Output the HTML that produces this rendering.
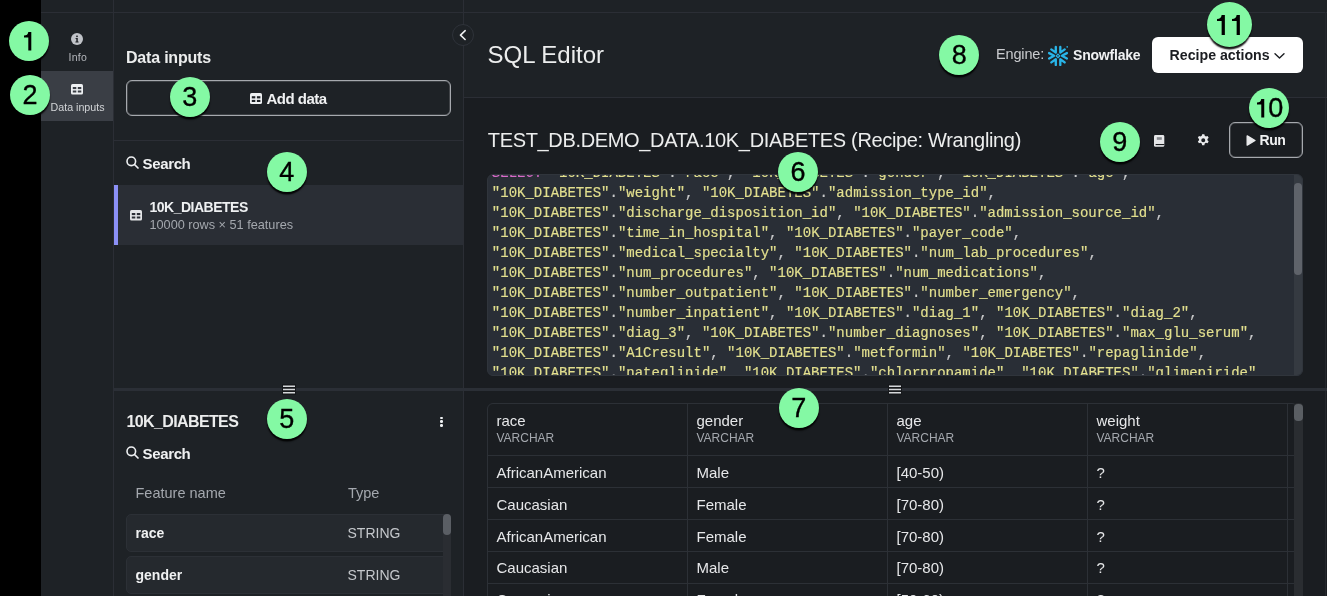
<!DOCTYPE html>
<html><head><meta charset="utf-8">
<style>
*{margin:0;padding:0;box-sizing:border-box}
html,body{width:1327px;height:596px;overflow:hidden;background:#1e2226;font-family:"Liberation Sans",sans-serif;color:#e8e9ea}
.a{position:absolute}
.t{position:absolute;white-space:nowrap}
.badge{position:absolute;border-radius:50%;background:#84f9a4;box-shadow:0 2.5px 1.5px rgba(0,0,0,.92)}
.code{position:absolute;font-family:"Liberation Mono",monospace;font-size:14px;line-height:20px;white-space:pre;color:#e2df8e;-webkit-text-stroke:0.2px #e2df8e}
.code .p{color:#c9cacb;-webkit-text-stroke:0.2px #c9cacb}
.code .k{color:#d96bc9;-webkit-text-stroke:0.2px #d96bc9}
svg{position:absolute;overflow:visible}
</style></head><body>
<div style="position:absolute;left:0;top:0;width:1327px;height:596px;will-change:transform">

<div class="a" style="left:0px;top:0px;width:41px;height:596px;background:#000"></div>
<div class="a" style="left:464px;top:98px;width:863px;height:498px;background:#1a1d21"></div>
<div class="a" style="left:41px;top:12px;width:1286px;height:1px;background:#2b2e35"></div>
<div class="a" style="left:113px;top:0px;width:1px;height:596px;background:#2b2e35"></div>
<div class="a" style="left:463px;top:0px;width:1px;height:596px;background:#2b2e35"></div>
<div class="a" style="left:1325px;top:12px;width:1px;height:584px;background:#25282d"></div>
<div class="a" style="left:464px;top:97px;width:863px;height:1px;background:#2b2e35"></div>
<div class="a" style="left:41px;top:71px;width:72px;height:50px;background:#3a3e45"></div>
<svg style="left:71px;top:33px" width="12" height="12" viewBox="0 0 12 12"><circle cx="6" cy="6" r="6" fill="#c0c3c8"/><rect x="5.2" y="2.6" width="1.6" height="1.5" fill="#1f2226"/><path d="M4.6 5h2.2v3.6h.8v.9H4.4v-.9h.9V5.9h-.7z" fill="#1f2226"/></svg>
<div class="t" style="left:68.60px;top:51.71px;font-size:10.5px;line-height:10.5px;font-weight:400;color:#b4b7bc;letter-spacing:0.25px;">Info</div>
<svg style="left:71px;top:83.7px" width="12" height="10.5" viewBox="0 0 12 10.5"><rect x="0" y="0" width="12" height="10.5" rx="1.5" fill="#eef0f2"/><g fill="#3a3e45"><rect x="1.8" y="3.0" width="3.5" height="2.1"/><rect x="6.8" y="3.0" width="3.5" height="2.1"/><rect x="1.8" y="6.5" width="3.5" height="2.0"/><rect x="6.8" y="6.5" width="3.5" height="2.0"/></g></svg>
<div class="t" style="left:50.50px;top:101.94px;font-size:10.7px;line-height:10.7px;font-weight:400;color:#d2d4d7;letter-spacing:0px;">Data inputs</div>
<div class="t" style="left:126.00px;top:50.06px;font-size:16px;line-height:16px;font-weight:700;color:#eceded;letter-spacing:-0.2px;">Data inputs</div>
<div class="a" style="left:126px;top:80px;width:325px;height:36px;border:1px solid #a6a9ae;border-radius:6px;box-shadow:inset 0 0 0 0.6px rgba(166,169,174,.45)"></div>
<svg style="left:250px;top:93px" width="12" height="11" viewBox="0 0 12 11"><rect x="0" y="0" width="12" height="11" rx="1.6" fill="#eef0f2"/><g fill="#1e2226"><rect x="1.8" y="3.2" width="3.5" height="2.2"/><rect x="6.9" y="3.2" width="3.5" height="2.2"/><rect x="1.8" y="6.9" width="3.5" height="2.1"/><rect x="6.9" y="6.9" width="3.5" height="2.1"/></g></svg>
<div class="t" style="left:266.50px;top:90.60px;font-size:15px;line-height:15px;font-weight:700;color:#f0f1f2;letter-spacing:-0.5px;">Add data</div>
<div class="a" style="left:114px;top:140px;width:349px;height:1px;background:#2b2e35"></div>
<svg style="left:126px;top:156px" width="13" height="13" viewBox="0 0 13 13"><circle cx="5.3" cy="5.3" r="4.3" fill="none" stroke="#eef0f2" stroke-width="1.6"/><path d="M8.5 8.5L12 12" stroke="#eef0f2" stroke-width="1.7" stroke-linecap="round"/></svg>
<div class="t" style="left:142.50px;top:155.60px;font-size:15px;line-height:15px;font-weight:700;color:#f0f1f2;letter-spacing:-0.35px;">Search</div>
<div class="a" style="left:114px;top:185px;width:349px;height:60px;background:#2a2e35"></div>
<div class="a" style="left:114px;top:185px;width:4px;height:60px;background:#8b90f6"></div>
<svg style="left:130px;top:209.8px" width="12" height="10.5" viewBox="0 0 12 10.5"><rect x="0" y="0" width="12" height="10.5" rx="1.5" fill="#e4e6e8"/><g fill="#2a2e35"><rect x="1.8" y="3.0" width="3.5" height="2.1"/><rect x="6.8" y="3.0" width="3.5" height="2.1"/><rect x="1.8" y="6.5" width="3.5" height="2.0"/><rect x="6.8" y="6.5" width="3.5" height="2.0"/></g></svg>
<div class="t" style="left:149.50px;top:199.75px;font-size:14px;line-height:14px;font-weight:700;color:#eef0f2;letter-spacing:-0.5px;">10K_DIABETES</div>
<div class="t" style="left:149.50px;top:219.05px;font-size:12.7px;line-height:12.7px;font-weight:400;color:#a4a8ae;letter-spacing:0px;">10000 rows × 51 features</div>
<div class="a" style="left:114px;top:388px;width:1213px;height:3px;background:#2b2f36"></div>
<svg style="left:282px;top:384px" width="14" height="11" viewBox="0 0 14 11"><rect x="0" y="0" width="14" height="11" fill="#16181b"/><path d="M1 2.2H13M1 5.5H13M1 8.8H13" stroke="#d6d8db" stroke-width="1.5"/></svg>
<svg style="left:888px;top:384px" width="14" height="11" viewBox="0 0 14 11"><rect x="0" y="0" width="14" height="11" fill="#16181b"/><path d="M1 2.2H13M1 5.5H13M1 8.8H13" stroke="#d6d8db" stroke-width="1.5"/></svg>
<div class="t" style="left:126.50px;top:413.56px;font-size:16px;line-height:16px;font-weight:700;color:#eceded;letter-spacing:-0.62px;">10K_DIABETES</div>
<div class="a" style="left:440px;top:416.6px;width:2.5px;height:2.5px;background:#eef0f2;border-radius:50%"></div>
<div class="a" style="left:440px;top:420.3px;width:2.5px;height:2.5px;background:#eef0f2;border-radius:50%"></div>
<div class="a" style="left:440px;top:424.1px;width:2.5px;height:2.5px;background:#eef0f2;border-radius:50%"></div>
<svg style="left:126px;top:446px" width="13" height="13" viewBox="0 0 13 13"><circle cx="5.3" cy="5.3" r="4.3" fill="none" stroke="#eef0f2" stroke-width="1.6"/><path d="M8.5 8.5L12 12" stroke="#eef0f2" stroke-width="1.7" stroke-linecap="round"/></svg>
<div class="t" style="left:142.50px;top:446.00px;font-size:15px;line-height:15px;font-weight:700;color:#f0f1f2;letter-spacing:-0.35px;">Search</div>
<div class="t" style="left:135.50px;top:485.53px;font-size:14.5px;line-height:14.5px;font-weight:400;color:#a4a8ae;letter-spacing:0px;">Feature name</div>
<div class="t" style="left:348.00px;top:485.53px;font-size:14.5px;line-height:14.5px;font-weight:400;color:#a4a8ae;letter-spacing:0px;">Type</div>
<div class="a" style="left:126px;top:514px;width:323px;height:38px;background:#25292e;border:1px solid #2c3036;border-radius:5px"></div>
<div class="t" style="left:135.50px;top:526.45px;font-size:14px;line-height:14px;font-weight:700;color:#f0f1f2;letter-spacing:0px;">race</div>
<div class="t" style="left:347.50px;top:526.45px;font-size:14px;line-height:14px;font-weight:400;color:#c4c7cb;letter-spacing:0px;">STRING</div>
<div class="a" style="left:126px;top:556px;width:323px;height:38px;background:#25292e;border:1px solid #2c3036;border-radius:5px"></div>
<div class="t" style="left:135.50px;top:568.45px;font-size:14px;line-height:14px;font-weight:700;color:#f0f1f2;letter-spacing:0px;">gender</div>
<div class="t" style="left:347.50px;top:568.45px;font-size:14px;line-height:14px;font-weight:400;color:#c4c7cb;letter-spacing:0px;">STRING</div>
<div class="a" style="left:443px;top:514px;width:8px;height:82px;background:#2a2d32;border-radius:4px 4px 0 0"></div>
<div class="a" style="left:443px;top:514px;width:8px;height:21px;background:#5a5e64;border-radius:4px"></div>
<svg style="left:452px;top:24px" width="22" height="22" viewBox="0 0 22 22"><circle cx="11" cy="11" r="10.5" fill="#1e2226" stroke="#2f333a" stroke-width="1"/><path d="M13.2 6.7L8.5 11.1L13.1 15.5" fill="none" stroke="#eef0f2" stroke-width="1.6" stroke-linecap="round" stroke-linejoin="round"/></svg>
<div class="t" style="left:487.50px;top:43.28px;font-size:24px;line-height:24px;font-weight:400;color:#eceded;letter-spacing:0px;">SQL Editor</div>
<div class="t" style="left:996.00px;top:47.13px;font-size:14.5px;line-height:14.5px;font-weight:400;color:#c9cbce;letter-spacing:-0.15px;">Engine:</div>
<svg style="left:1048px;top:45.7px" width="20" height="20" viewBox="0 0 20 20"><g fill="none" stroke="#29b5e8" stroke-width="2.35" stroke-linecap="round" stroke-linejoin="round"><path d="M3.3 3.4L7.8 6.6V0.9"/><path d="M16.7 3.4L12.3 6.6V0.9"/><path d="M1.1 7.1L6.1 9.8L1.1 12.5"/><path d="M18.9 7.1L13.9 9.8L18.9 12.5"/><path d="M3.3 16.4L7.8 13.2V18.9"/><path d="M16.7 16.4L12.3 13.2V18.9"/></g><path d="M10 8.2L11.7 9.9L10 11.6L8.3 9.9Z" fill="none" stroke="#29b5e8" stroke-width="1.2"/><circle cx="19.2" cy="0.9" r="0.8" fill="#29b5e8"/></svg>
<div class="t" style="left:1073.00px;top:47.65px;font-size:14px;line-height:14px;font-weight:700;color:#f0f1f2;letter-spacing:-0.2px;">Snowflake</div>
<div class="a" style="left:1152px;top:37px;width:151px;height:36px;background:#fff;border-radius:6px"></div>
<div class="t" style="left:1169.50px;top:47.78px;font-size:14.2px;line-height:14.2px;font-weight:700;color:#1b1d21;letter-spacing:0px;">Recipe actions</div>
<svg style="left:1274px;top:53px" width="11" height="6" viewBox="0 0 11 6"><path d="M1 0.8L5.5 5L10 0.8" fill="none" stroke="#1b1d21" stroke-width="1.4" stroke-linecap="round" stroke-linejoin="round"/></svg>
<div class="t" style="left:487.80px;top:129.87px;font-size:20px;line-height:20px;font-weight:400;color:#eceded;letter-spacing:-0.34px;">TEST_DB.DEMO_DATA.10K_DIABETES (Recipe: Wrangling)</div>
<svg style="left:1154px;top:134.8px" width="10.3" height="11.8" viewBox="0 0 10.3 11.8"><rect x="0" y="0" width="10.3" height="11.8" rx="1.4" fill="#e6e7e9"/><rect x="2.8" y="2.2" width="5" height="2.6" fill="#85888d"/><rect x="1.6" y="9" width="8.7" height="1.1" fill="#1a1d20"/></svg>
<svg style="left:1197px;top:134px" width="12.5" height="12.5" viewBox="-6.25 -6.25 12.5 12.5"><path fill="#e9eaec" fill-rule="evenodd" d="M-1.1 -6.1h2.2l.4 1.6 1.2.7 1.6-.5 1.1 1.9-1.2 1.1v1.4l1.2 1.1-1.1 1.9-1.6-.5-1.2.7-.4 1.6h-2.2l-.4-1.6-1.2-.7-1.6.5-1.1-1.9 1.2-1.1v-1.4l-1.2-1.1 1.1-1.9 1.6.5 1.2-.7zM0 -2A2 2 0 1 0 0 2A2 2 0 1 0 0 -2z"/></svg>
<div class="a" style="left:1229px;top:122px;width:74px;height:36px;border:1px solid #a6a9ae;border-radius:6px;box-shadow:inset 0 0 0 0.6px rgba(166,169,174,.45)"></div>
<svg style="left:1245.5px;top:135px" width="10" height="11" viewBox="0 0 10 11"><path d="M1.2 0.9L9 5.5L1.2 10.1Z" fill="#e9eaec" stroke="#e9eaec" stroke-width="1.4" stroke-linejoin="round"/></svg>
<div class="t" style="left:1259.50px;top:133.35px;font-size:14px;line-height:14px;font-weight:700;color:#f0f1f2;letter-spacing:-0.4px;">Run</div>
<div class="a" style="left:487px;top:174px;width:816px;height:202px;background:#292e36;border:1px solid #30353c;border-radius:6px;overflow:hidden">
<div class="code" style="left:3.85px;top:-12.33px"><span class="k">SELECT </span>"10K_DIABETES"<span class="p">.</span>"race"<span class="p">, </span>"10K_DIABETES"<span class="p">.</span>"gender"<span class="p">, </span>"10K_DIABETES"<span class="p">.</span>"age"<span class="p">,</span></div>
<div class="code" style="left:3.85px;top:7.67px">"10K_DIABETES"<span class="p">.</span>"weight"<span class="p">, </span>"10K_DIABETES"<span class="p">.</span>"admission_type_id"<span class="p">,</span></div>
<div class="code" style="left:3.85px;top:27.67px">"10K_DIABETES"<span class="p">.</span>"discharge_disposition_id"<span class="p">, </span>"10K_DIABETES"<span class="p">.</span>"admission_source_id"<span class="p">,</span></div>
<div class="code" style="left:3.85px;top:47.67px">"10K_DIABETES"<span class="p">.</span>"time_in_hospital"<span class="p">, </span>"10K_DIABETES"<span class="p">.</span>"payer_code"<span class="p">,</span></div>
<div class="code" style="left:3.85px;top:67.67px">"10K_DIABETES"<span class="p">.</span>"medical_specialty"<span class="p">, </span>"10K_DIABETES"<span class="p">.</span>"num_lab_procedures"<span class="p">,</span></div>
<div class="code" style="left:3.85px;top:87.67px">"10K_DIABETES"<span class="p">.</span>"num_procedures"<span class="p">, </span>"10K_DIABETES"<span class="p">.</span>"num_medications"<span class="p">,</span></div>
<div class="code" style="left:3.85px;top:107.67px">"10K_DIABETES"<span class="p">.</span>"number_outpatient"<span class="p">, </span>"10K_DIABETES"<span class="p">.</span>"number_emergency"<span class="p">,</span></div>
<div class="code" style="left:3.85px;top:127.67px">"10K_DIABETES"<span class="p">.</span>"number_inpatient"<span class="p">, </span>"10K_DIABETES"<span class="p">.</span>"diag_1"<span class="p">, </span>"10K_DIABETES"<span class="p">.</span>"diag_2"<span class="p">,</span></div>
<div class="code" style="left:3.85px;top:147.67px">"10K_DIABETES"<span class="p">.</span>"diag_3"<span class="p">, </span>"10K_DIABETES"<span class="p">.</span>"number_diagnoses"<span class="p">, </span>"10K_DIABETES"<span class="p">.</span>"max_glu_serum"<span class="p">,</span></div>
<div class="code" style="left:3.85px;top:167.67px">"10K_DIABETES"<span class="p">.</span>"A1Cresult"<span class="p">, </span>"10K_DIABETES"<span class="p">.</span>"metformin"<span class="p">, </span>"10K_DIABETES"<span class="p">.</span>"repaglinide"<span class="p">,</span></div>
<div class="code" style="left:3.85px;top:187.67px">"10K_DIABETES"<span class="p">.</span>"nateglinide"<span class="p">, </span>"10K_DIABETES"<span class="p">.</span>"chlorpropamide"<span class="p">, </span>"10K_DIABETES"<span class="p">.</span>"glimepiride"<span class="p">,</span></div>
<div class="a" style="left:806px;top:-1px;width:9px;height:202px;background:#353a41"></div>
<div class="a" style="left:806px;top:8px;width:8px;height:92px;background:#5f636a;border-radius:4px"></div>
</div>
<div class="a" style="left:487px;top:403px;width:811px;height:200px;border:1px solid #2c3036;border-radius:6px"></div>
<div class="a" style="left:687px;top:404px;width:1px;height:192px;background:#2c3036"></div>
<div class="a" style="left:887px;top:404px;width:1px;height:192px;background:#2c3036"></div>
<div class="a" style="left:1087px;top:404px;width:1px;height:192px;background:#2c3036"></div>
<div class="a" style="left:1287px;top:404px;width:1px;height:192px;background:#2c3036"></div>
<div class="a" style="left:488px;top:455px;width:806px;height:1px;background:#2c3036"></div>
<div class="a" style="left:488px;top:487px;width:806px;height:1px;background:#2c3036"></div>
<div class="a" style="left:488px;top:519px;width:806px;height:1px;background:#2c3036"></div>
<div class="a" style="left:488px;top:551px;width:806px;height:1px;background:#2c3036"></div>
<div class="a" style="left:488px;top:583px;width:806px;height:1px;background:#2c3036"></div>
<div class="a" style="left:1294px;top:403px;width:9px;height:193px;background:#2a2d31;border-radius:4px 4px 0 0"></div>
<div class="a" style="left:1294px;top:404px;width:8.5px;height:17px;background:#5a5e63;border-radius:4px"></div>
<div class="t" style="left:496.50px;top:413.10px;font-size:15px;line-height:15px;font-weight:400;color:#e6e7e9;letter-spacing:0px;">race</div>
<div class="t" style="left:496.50px;top:431.54px;font-size:12px;line-height:12px;font-weight:400;color:#a4a8ae;letter-spacing:0px;">VARCHAR</div>
<div class="t" style="left:496.50px;top:465.20px;font-size:15px;line-height:15px;font-weight:400;color:#e6e7e9;letter-spacing:0px;">AfricanAmerican</div>
<div class="t" style="left:496.50px;top:496.95px;font-size:15px;line-height:15px;font-weight:400;color:#e6e7e9;letter-spacing:0px;">Caucasian</div>
<div class="t" style="left:496.50px;top:528.70px;font-size:15px;line-height:15px;font-weight:400;color:#e6e7e9;letter-spacing:0px;">AfricanAmerican</div>
<div class="t" style="left:496.50px;top:560.45px;font-size:15px;line-height:15px;font-weight:400;color:#e6e7e9;letter-spacing:0px;">Caucasian</div>
<div class="t" style="left:496.50px;top:592.20px;font-size:15px;line-height:15px;font-weight:400;color:#e6e7e9;letter-spacing:0px;">Caucasian</div>
<div class="t" style="left:696.50px;top:413.10px;font-size:15px;line-height:15px;font-weight:400;color:#e6e7e9;letter-spacing:0px;">gender</div>
<div class="t" style="left:696.50px;top:431.54px;font-size:12px;line-height:12px;font-weight:400;color:#a4a8ae;letter-spacing:0px;">VARCHAR</div>
<div class="t" style="left:696.50px;top:465.20px;font-size:15px;line-height:15px;font-weight:400;color:#e6e7e9;letter-spacing:0px;">Male</div>
<div class="t" style="left:696.50px;top:496.95px;font-size:15px;line-height:15px;font-weight:400;color:#e6e7e9;letter-spacing:0px;">Female</div>
<div class="t" style="left:696.50px;top:528.70px;font-size:15px;line-height:15px;font-weight:400;color:#e6e7e9;letter-spacing:0px;">Female</div>
<div class="t" style="left:696.50px;top:560.45px;font-size:15px;line-height:15px;font-weight:400;color:#e6e7e9;letter-spacing:0px;">Male</div>
<div class="t" style="left:696.50px;top:592.20px;font-size:15px;line-height:15px;font-weight:400;color:#e6e7e9;letter-spacing:0px;">Female</div>
<div class="t" style="left:896.50px;top:413.10px;font-size:15px;line-height:15px;font-weight:400;color:#e6e7e9;letter-spacing:0px;">age</div>
<div class="t" style="left:896.50px;top:431.54px;font-size:12px;line-height:12px;font-weight:400;color:#a4a8ae;letter-spacing:0px;">VARCHAR</div>
<div class="t" style="left:896.50px;top:465.20px;font-size:15px;line-height:15px;font-weight:400;color:#e6e7e9;letter-spacing:0px;">[40-50)</div>
<div class="t" style="left:896.50px;top:496.95px;font-size:15px;line-height:15px;font-weight:400;color:#e6e7e9;letter-spacing:0px;">[70-80)</div>
<div class="t" style="left:896.50px;top:528.70px;font-size:15px;line-height:15px;font-weight:400;color:#e6e7e9;letter-spacing:0px;">[70-80)</div>
<div class="t" style="left:896.50px;top:560.45px;font-size:15px;line-height:15px;font-weight:400;color:#e6e7e9;letter-spacing:0px;">[70-80)</div>
<div class="t" style="left:896.50px;top:592.20px;font-size:15px;line-height:15px;font-weight:400;color:#e6e7e9;letter-spacing:0px;">[50-60)</div>
<div class="t" style="left:1096.50px;top:413.10px;font-size:15px;line-height:15px;font-weight:400;color:#e6e7e9;letter-spacing:0px;">weight</div>
<div class="t" style="left:1096.50px;top:431.54px;font-size:12px;line-height:12px;font-weight:400;color:#a4a8ae;letter-spacing:0px;">VARCHAR</div>
<div class="t" style="left:1096.50px;top:465.20px;font-size:15px;line-height:15px;font-weight:400;color:#e6e7e9;letter-spacing:0px;">?</div>
<div class="t" style="left:1096.50px;top:496.95px;font-size:15px;line-height:15px;font-weight:400;color:#e6e7e9;letter-spacing:0px;">?</div>
<div class="t" style="left:1096.50px;top:528.70px;font-size:15px;line-height:15px;font-weight:400;color:#e6e7e9;letter-spacing:0px;">?</div>
<div class="t" style="left:1096.50px;top:560.45px;font-size:15px;line-height:15px;font-weight:400;color:#e6e7e9;letter-spacing:0px;">?</div>
<div class="t" style="left:1096.50px;top:592.20px;font-size:15px;line-height:15px;font-weight:400;color:#e6e7e9;letter-spacing:0px;">?</div>
<div class="badge" style="left:9.0px;top:20.7px;width:40px;height:40px"></div>
<svg style="left:23.80px;top:32.30px" width="7.30" height="18.60" viewBox="0 0 7.3 18.6" preserveAspectRatio="none"><path d="M4.3 0H7.3V18.6H4.3V5.6H0V3.6C2.6 3.6 4.0 2.3 4.3 0Z" fill="#000"/></svg>
<div class="badge" style="left:10.0px;top:74.8px;width:40px;height:40px"></div>
<div class="t" style="left:0.00px;top:82.24px;font-size:27px;line-height:27px;font-weight:400;color:#000;letter-spacing:0px;width:60px;text-align:center;-webkit-text-stroke:0.35px #000">2</div>
<div class="badge" style="left:169.8px;top:77.0px;width:40px;height:40px"></div>
<div class="t" style="left:159.80px;top:84.44px;font-size:27px;line-height:27px;font-weight:400;color:#000;letter-spacing:0px;width:60px;text-align:center;-webkit-text-stroke:0.35px #000">3</div>
<div class="badge" style="left:266.7px;top:151.9px;width:40px;height:40px"></div>
<div class="t" style="left:256.70px;top:159.34px;font-size:27px;line-height:27px;font-weight:400;color:#000;letter-spacing:0px;width:60px;text-align:center;-webkit-text-stroke:0.35px #000">4</div>
<div class="badge" style="left:266.7px;top:398.7px;width:40px;height:40px"></div>
<div class="t" style="left:256.70px;top:406.14px;font-size:27px;line-height:27px;font-weight:400;color:#000;letter-spacing:0px;width:60px;text-align:center;-webkit-text-stroke:0.35px #000">5</div>
<div class="badge" style="left:778.0px;top:151.9px;width:40px;height:40px"></div>
<div class="t" style="left:768.00px;top:159.34px;font-size:27px;line-height:27px;font-weight:400;color:#000;letter-spacing:0px;width:60px;text-align:center;-webkit-text-stroke:0.35px #000">6</div>
<div class="badge" style="left:778.7px;top:387.7px;width:40px;height:40px"></div>
<div class="t" style="left:768.70px;top:395.14px;font-size:27px;line-height:27px;font-weight:400;color:#000;letter-spacing:0px;width:60px;text-align:center;-webkit-text-stroke:0.35px #000">7</div>
<div class="badge" style="left:939.2px;top:34.5px;width:40px;height:40px"></div>
<div class="t" style="left:929.20px;top:41.94px;font-size:27px;line-height:27px;font-weight:400;color:#000;letter-spacing:0px;width:60px;text-align:center;-webkit-text-stroke:0.35px #000">8</div>
<div class="badge" style="left:1099.7px;top:121.7px;width:40px;height:40px"></div>
<div class="t" style="left:1089.70px;top:129.14px;font-size:27px;line-height:27px;font-weight:400;color:#000;letter-spacing:0px;width:60px;text-align:center;-webkit-text-stroke:0.35px #000">9</div>
<div class="badge" style="left:1248.5px;top:88.0px;width:40px;height:40px"></div>
<svg style="left:1257.24px;top:99.40px" width="7.26" height="18.50" viewBox="0 0 7.3 18.6" preserveAspectRatio="none"><path d="M4.3 0H7.3V18.6H4.3V5.6H0V3.6C2.6 3.6 4.0 2.3 4.3 0Z" fill="#000"/></svg>
<div class="t" style="left:1268.30px;top:95.04px;font-size:27px;line-height:27px;font-weight:400;color:#000;letter-spacing:0px;-webkit-text-stroke:0.35px #000">0</div>
<div class="badge" style="left:1207.3px;top:1.7px;width:45px;height:45px"></div>
<svg style="left:1216.81px;top:14.70px" width="7.89" height="20.10" viewBox="0 0 7.3 18.6" preserveAspectRatio="none"><path d="M4.3 0H7.3V18.6H4.3V5.6H0V3.6C2.6 3.6 4.0 2.3 4.3 0Z" fill="#000"/></svg>
<svg style="left:1231.51px;top:14.70px" width="7.89" height="20.10" viewBox="0 0 7.3 18.6" preserveAspectRatio="none"><path d="M4.3 0H7.3V18.6H4.3V5.6H0V3.6C2.6 3.6 4.0 2.3 4.3 0Z" fill="#000"/></svg>
</div></body></html>
